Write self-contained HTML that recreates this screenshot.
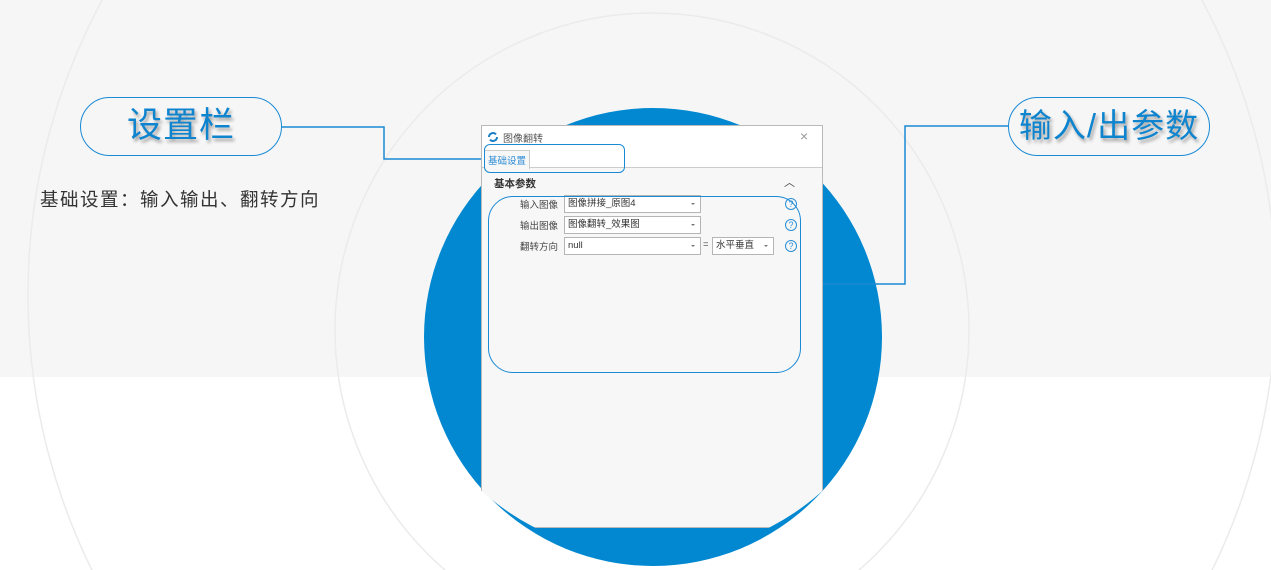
<!DOCTYPE html>
<html><head><meta charset="utf-8"><style>
*{margin:0;padding:0;box-sizing:border-box}
html,body{width:1271px;height:570px;overflow:hidden}
body{position:relative;background:#fff;font-family:"Liberation Sans","Noto Sans CJK SC",sans-serif}
.abs{position:absolute}
.pill{border:1.5px solid #1a8ad4;border-radius:30px;height:59px;color:#0e84cf;font-size:35px;text-align:center;line-height:56px;text-shadow:2px 3px 3px rgba(0,0,0,.35);letter-spacing:1px}
.dlg{left:481px;top:125px;width:342px;height:403px;background:#f7f7f7;border:1px solid #b9b9b9;clip-path:circle(256px at 171px 175px)}
.sel{position:absolute;height:18px;border:1px solid #b5b5b5;background:#fff;font-size:9.5px;color:#333;padding-left:3px;line-height:16px}
.sel:after{content:"";position:absolute;right:5px;top:7px;border:2px solid transparent;border-top:2.5px solid #777}
.lbl{position:absolute;font-size:9.5px;color:#444;left:38px}
.q{position:absolute;left:303px;width:12px;height:12px;border:1px solid #2b8fd6;border-radius:50%;color:#2b8fd6;font-size:9px;line-height:10px;text-align:center}
</style></head><body>
<svg class="abs" style="left:0;top:0" width="1271" height="570">
<rect x="0" y="0" width="1271" height="377" fill="#f6f6f6"/>
<circle cx="652" cy="295" r="624" fill="none" stroke="#ebebeb" stroke-width="1.5"/>
<circle cx="652" cy="330" r="317" fill="none" stroke="#ebebeb" stroke-width="1.5"/>
<circle cx="653" cy="337" r="229" fill="#0288d1"/>
<polyline points="282,127 384,127 384,159 484,159" fill="none" stroke="#1a8ad4" stroke-width="1.5"/>
<polyline points="1008,126 905,126 905,284 800,284" fill="none" stroke="#1a8ad4" stroke-width="1.5"/>
</svg>

<div class="abs pill" style="left:80px;top:97px;width:202px">设置栏</div>
<div class="abs pill" style="left:1008px;top:97px;width:202px;font-size:33px">输入/出参数</div>
<div class="abs" style="left:40px;top:186px;font-size:18.5px;letter-spacing:1.5px;color:#333">基础设置：输入输出、翻转方向</div>

<div class="abs dlg">
  <div class="abs" style="left:0;top:0;width:340px;height:23px;background:#fff"></div>
  <svg class="abs" style="left:5px;top:5px" width="12" height="12" viewBox="0 0 12 12"><path d="M2 6a4 4 0 0 1 7-2.6M10 6a4 4 0 0 1-7 2.6" fill="none" stroke="#1a7fc8" stroke-width="2"/></svg>
  <div class="abs" style="left:21px;top:4px;font-size:10px;color:#555">图像翻转</div>
  <div class="abs" style="left:318px;top:2px;font-size:14px;color:#999">×</div>
  <div class="abs" style="left:0;top:23px;width:340px;height:19px;background:#fff;border-bottom:1px solid #ccc"></div>
  <div class="abs" style="left:2px;top:24px;width:46px;height:19px;background:#f7f7f7;border:1px solid #ccc;border-bottom:none;font-size:9.5px;color:#2a8ad4;padding:2px 0 0 3px">基础设置</div>
  <div class="abs" style="left:12px;top:50px;font-size:10.5px;font-weight:bold;color:#333">基本参数</div>
  <div class="abs" style="left:302px;top:48px;font-size:11px;color:#444">︿</div>
  <div class="lbl" style="top:71px">输入图像</div>
  <div class="sel" style="left:82px;top:69px;width:137px">图像拼接_原图4</div>
  <div class="q" style="top:72px">?</div>
  <div class="lbl" style="top:92px">输出图像</div>
  <div class="sel" style="left:82px;top:90px;width:137px">图像翻转_效果图</div>
  <div class="q" style="top:93px">?</div>
  <div class="lbl" style="top:113px">翻转方向</div>
  <div class="sel" style="left:82px;top:111px;width:137px">null</div>
  <div class="abs" style="left:221px;top:113px;font-size:9.5px;color:#444">=</div>
  <div class="sel" style="left:230px;top:111px;width:62px">水平垂直</div>
  <div class="q" style="top:114px">?</div>
</div>

<div class="abs" style="left:484px;top:144px;width:141px;height:29px;border:1.5px solid #1a8ad4;border-radius:6px"></div>
<div class="abs" style="left:488px;top:196px;width:313px;height:177px;border:1.5px solid #1a8ad4;border-radius:25px"></div>
</body></html>
